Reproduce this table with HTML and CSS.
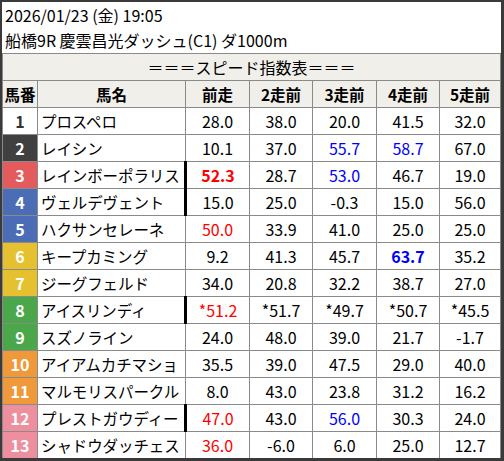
FILE: index.html
```html
<!DOCTYPE html>
<html lang="ja">
<head>
<meta charset="utf-8">
<link rel="stylesheet" href="styles.css">
</head>
<body>
<div class="frame">
  <div class="head">
    <div>2026/01/23 (金) 19:05</div>
    <div>船橋9R 慶雲昌光ダッシュ(C1) ダ1000m</div>
  </div>
  <table class="sp">
    <colgroup>
      <col class="c-no"><col class="c-name"><col class="c-v"><col class="c-v2"><col class="c-v"><col class="c-v2"><col class="c-v3">
    </colgroup>
    <thead>
      <tr><th colspan="7" class="title">＝＝＝スピード指数表＝＝＝</th></tr>
      <tr class="hdr"><th>馬番</th><th>馬名</th><th>前走</th><th>2走前</th><th>3走前</th><th>4走前</th><th>5走前</th></tr>
    </thead>
    <tbody>
      <tr><td class="no w1">1</td><td class="nm">プロスペロ</td><td>28.0</td><td>38.0</td><td>20.0</td><td>41.5</td><td>32.0</td></tr>
      <tr><td class="no w2">2</td><td class="nm">レイシン</td><td>10.1</td><td>37.0</td><td class="blue">55.7</td><td class="blue">58.7</td><td>67.0</td></tr>
      <tr><td class="no w3">3</td><td class="nm">レインボーポラリス</td><td class="mark red b">52.3</td><td>28.7</td><td class="blue">53.0</td><td>46.7</td><td>19.0</td></tr>
      <tr><td class="no w4">4</td><td class="nm">ヴェルデヴェント</td><td class="mark">15.0</td><td>25.0</td><td>-0.3</td><td>15.0</td><td>56.0</td></tr>
      <tr><td class="no w4">5</td><td class="nm">ハクサンセレーネ</td><td class="red">50.0</td><td>33.9</td><td>41.0</td><td>25.0</td><td>25.0</td></tr>
      <tr><td class="no w5">6</td><td class="nm">キープカミング</td><td>9.2</td><td>41.3</td><td>45.7</td><td class="blue b">63.7</td><td>35.2</td></tr>
      <tr><td class="no w5">7</td><td class="nm">ジーグフェルド</td><td>34.0</td><td>20.8</td><td>32.2</td><td>38.7</td><td>27.0</td></tr>
      <tr><td class="no w6">8</td><td class="nm">アイスリンディ</td><td class="mark red">*51.2</td><td>*51.7</td><td>*49.7</td><td>*50.7</td><td>*45.5</td></tr>
      <tr><td class="no w6">9</td><td class="nm">スズノライン</td><td>24.0</td><td>48.0</td><td>39.0</td><td>21.7</td><td>-1.7</td></tr>
      <tr><td class="no w7">10</td><td class="nm">アイアムカチマショ</td><td>35.5</td><td>39.0</td><td>47.5</td><td>29.0</td><td>40.0</td></tr>
      <tr><td class="no w7">11</td><td class="nm">マルモリスパークル</td><td>8.0</td><td>43.0</td><td>23.8</td><td>31.2</td><td>16.2</td></tr>
      <tr><td class="no w8">12</td><td class="nm">プレストガウディー</td><td class="mark red">47.0</td><td>43.0</td><td class="blue">56.0</td><td>30.3</td><td>24.0</td></tr>
      <tr><td class="no w8">13</td><td class="nm">シャドウダッチェス</td><td class="red">36.0</td><td>-6.0</td><td>6.0</td><td>25.0</td><td>12.7</td></tr>
    </tbody>
  </table>
</div>
</body>
</html>
```
FILE: styles.css
```css
* { box-sizing: border-box; }
body {
  margin: 0;
  font-family: "Noto Sans CJK JP", "Noto Sans", sans-serif;
  color: #000;
}
.frame {
  width: 504px;
  height: 461px;
  border-style: solid;
  border-color: #3a3a3a;
  border-width: 2px 3px 3px 2px;
  background: #fff;
  overflow: hidden;
}
.head {
  height: 51px;
  padding: 1px 3px 0;
  font-size: 16px;
  line-height: 25px;
}
.sp {
  border-collapse: collapse;
  table-layout: fixed;
  width: 499px;
  font-size: 16px;
}
.c-no { width: 35px; }
.c-name { width: 148px; }
.c-v { width: 64px; }
.c-v2 { width: 63px; }
.c-v3 { width: 61px; }
.sp th, .sp td {
  border: 1px solid #8a8a8a;
  height: 27px;
  padding: 0;
  text-align: center;
  line-height: 25px;
  white-space: nowrap;
  overflow: hidden;
}
.sp th {
  background: #f1efea;
  font-weight: 700;
  font-size: 15.5px;
}
.sp th.title {
  font-weight: 400;
  font-size: 16px;
}
.sp td.nm {
  text-align: left;
  padding-left: 3px;
  font-size: 15.5px;
  letter-spacing: -0.1px;
}
.sp td.no {
  font-weight: 700;
  color: #fff;
}
.sp td.mark { border-left: 3px solid #000; }
.w1 { background: #fff; }
.sp td.w1 { color: #333; }
.w2 { background: #404040; }
.w3 { background: #e35b5d; }
.w4 { background: #4a6db5; }
.w5 { background: #e6c12f; }
.w6 { background: #4aa84b; }
.w7 { background: #ef993b; }
.w8 { background: #ee8fa0; }
.red { color: #ff0000; }
.blue { color: #0000ff; }
.b { font-weight: 700; }
```
